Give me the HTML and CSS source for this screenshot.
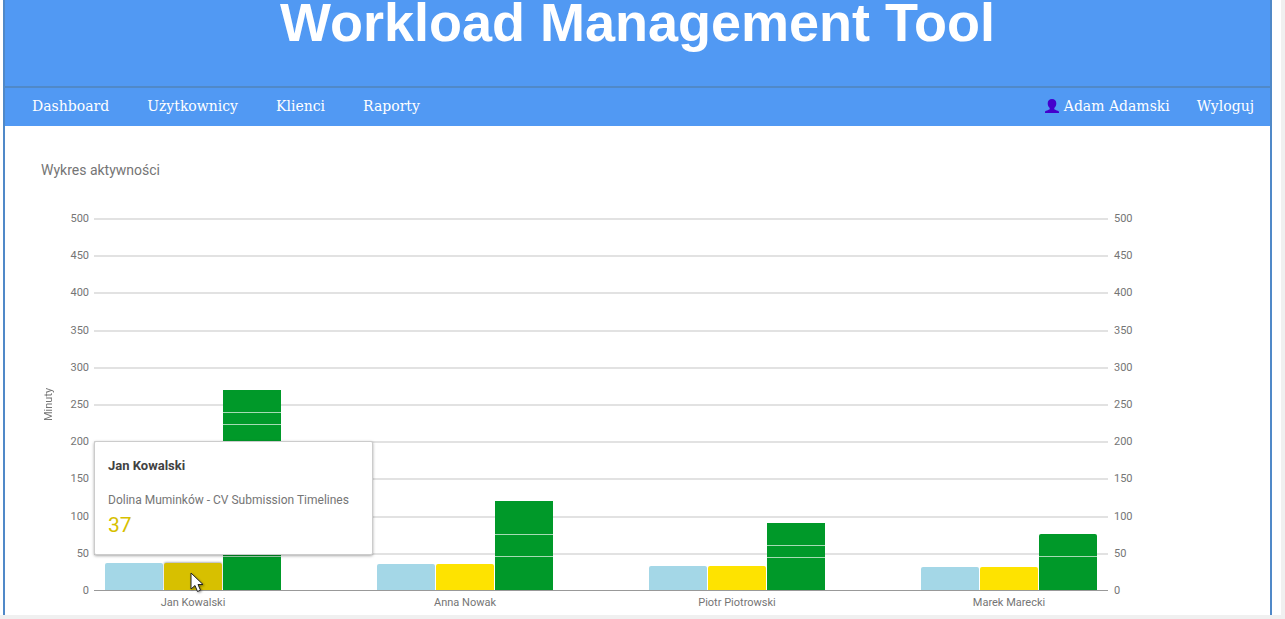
FILE: index.html
```html
<!DOCTYPE html>
<html lang="pl">
<head>
<meta charset="utf-8">
<title>Workload Management Tool</title>
<link rel="stylesheet" href="styles.css">
</head>
<body>
<div class="page">
  <div class="frame">
    <header class="banner"><h1>Workload Management Tool</h1></header>
    <nav class="nav">
      <div class="nav-main">
        <a href="#">Dashboard</a>
        <a href="#">Użytkownicy</a>
        <a href="#">Klienci</a>
        <a href="#">Raporty</a>
      </div>
      <div class="nav-user">
        <a href="#" class="user"><svg class="user-icon" viewBox="0 0 14 14" aria-hidden="true"><path d="M7 0C4.300 0 2.700 1.700 2.700 4.200c0 2 .7 3.700 2 4.700v1.300C3.800 11.200 0 11.300 0 13v1h14v-1c0-1.700-3.800-1.800-4.700-2.800V8.900c1.300-1 2-2.700 2-4.700C11.300 1.700 9.700 0 7 0z"/></svg>Adam Adamski</a>
        <a href="#">Wyloguj</a>
      </div>
    </nav>
    <main class="content">
      <h2 class="chart-title">Wykres aktywności</h2>
      <div class="chart">
        <div class="unit">Minuty</div>
        <div class="axis axis-left">
          <span>500</span><span>450</span><span>400</span><span>350</span><span>300</span><span>250</span><span>200</span><span>150</span><span>100</span><span>50</span><span>0</span>
        </div>
        <div class="plot">
          <div class="lines"><i></i><i></i><i></i><i></i><i></i><i></i><i></i><i></i><i></i><i></i><i></i></div>
          <div class="groups">
            <div class="group">
              <div class="bar blue" style="--v:36.5"></div>
              <div class="bar yellow active" style="--v:37">
                <div class="tooltip" role="tooltip">
                  <strong>Jan Kowalski</strong>
                  <span class="series">Dolina Muminków - CV Submission Timelines</span>
                  <span class="value">37</span>
                </div>
                <svg class="cursor" viewBox="0 0 14 21" aria-hidden="true"><path d="M1 1v16l4-3.500 2.500 6 3-1.300L8 12.500h5z"/></svg>
              </div>
              <div class="bar stack" style="--v:270"><i style="flex-grow:30"></i><i style="flex-grow:15"></i><i style="flex-grow:180"></i><i style="flex-grow:45"></i></div>
            </div>
            <div class="group">
              <div class="bar blue" style="--v:34.5"></div>
              <div class="bar yellow" style="--v:34.5"></div>
              <div class="bar stack" style="--v:120"><i style="flex-grow:45"></i><i style="flex-grow:30"></i><i style="flex-grow:45"></i></div>
            </div>
            <div class="group">
              <div class="bar blue" style="--v:32.5"></div>
              <div class="bar yellow" style="--v:32.5"></div>
              <div class="bar stack" style="--v:90"><i style="flex-grow:30"></i><i style="flex-grow:15"></i><i style="flex-grow:45"></i></div>
            </div>
            <div class="group">
              <div class="bar blue" style="--v:31.5"></div>
              <div class="bar yellow" style="--v:31.5"></div>
              <div class="bar stack rounded" style="--v:75"><i style="flex-grow:30"></i><i style="flex-grow:45"></i></div>
            </div>
          </div>
        </div>
        <div class="axis axis-right">
          <span>500</span><span>450</span><span>400</span><span>350</span><span>300</span><span>250</span><span>200</span><span>150</span><span>100</span><span>50</span><span>0</span>
        </div>
        <div class="names"><span>Jan Kowalski</span><span>Anna Nowak</span><span>Piotr Piotrowski</span><span>Marek Marecki</span></div>
      </div>
    </main>
  </div>
</div>
</body>
</html>
```

FILE: styles.css
```css
* { box-sizing: border-box; }

body {
  margin: 0;
  background: #f0f0f0;
  font-family: Roboto, "Liberation Sans", sans-serif;
}

.page {
  display: flex;
  min-height: calc(100vh - 4px);
  margin: 0 4px 4px 0;
  padding: 0 9px 0 3px;
  background: #fff;
}

.frame {
  flex: 1;
  min-width: 0;
  border: solid #5089c8;
  border-width: 0 2px;
}

.banner {
  padding-bottom: 42px;
  background: #5199f3;
  color: #fff;
  text-align: center;
}

.banner h1 {
  margin: 0;
  font: bold 54px/44px "Liberation Sans", Arial, sans-serif;
}

.nav {
  display: flex;
  justify-content: space-between;
  padding: 0 16px 2px 27px;
  border-top: 2px solid #5089c8;
  background: #5199f3;
  font: 14px/36px "DejaVu Serif", serif;
}

.nav-main { display: flex; gap: 38px; }
.nav-user { display: flex; gap: 27px; }
.nav a { color: #fff; text-decoration: none; }

.user { display: flex; align-items: center; gap: 5px; }
.user-icon { width: 14px; height: 14px; fill: #4400cc; }

.content { padding: 36px 138px 0 36px; }

.chart-title {
  margin: 0 0 40px;
  color: #757575;
  font-size: 14px;
  font-weight: 400;
  line-height: 16px;
}

.chart {
  display: grid;
  grid-template-columns: 16px 37px 1fr 24px;
  grid-template-rows: 373px auto;
  color: #757575;
  font-size: 11px;
  line-height: 12px;
}

.unit {
  writing-mode: vertical-rl;
  transform: rotate(180deg);
  text-align: center;
  line-height: 16px;
}

.axis {
  display: flex;
  flex-direction: column;
  justify-content: space-between;
  margin: -5px 0 -6px;
}

.axis-left { padding-right: 5px; text-align: right; }
.axis-right { padding-left: 6px; }

.plot { display: grid; grid-template: 100% / 100%; }
.lines, .groups { grid-area: 1 / 1; }

.lines {
  display: flex;
  flex-direction: column;
  justify-content: space-between;
}

.lines i { height: 2px; background: #e2e2e2; }
.lines i:last-child { height: 1px; background: #999; }

.groups, .names {
  display: grid;
  grid-template-columns: repeat(4, 1fr);
  gap: 96px;
  padding: 0 11px;
}

.groups { margin: 1px 0; }

.group {
  display: grid;
  grid-template-columns: repeat(3, 1fr);
  gap: 1px;
  align-items: end;
}

.bar {
  height: calc(var(--v) / 500 * 100%);
  border-radius: 2px 2px 0 0;
}

.blue { background: #a4d7e7; }
.yellow { background: #fee300; }
.active {
  position: relative;
  background: #d7c000;
  box-shadow: 0 -1px 2px rgba(0, 0, 0, .3);
}

.stack { display: flex; flex-direction: column; border-radius: 1px 1px 0 0; }
.stack i { flex: 0 1 0; background: #009929; }
.stack i + i { border-top: 1px solid #a6dbb4; }
.rounded { border-radius: 2px 2px 0 0; overflow: hidden; }

.tooltip {
  position: absolute;
  z-index: 1;
  left: -70px;
  bottom: calc(100% + 8px);
  display: flex;
  flex-direction: column;
  min-width: 279px;
  padding: 16px 13px;
  border: 1px solid #ccc;
  border-radius: 2px;
  background: #fff;
  box-shadow: 0 1px 3px rgba(0, 0, 0, .35);
  font-size: 12px;
  line-height: 16px;
  white-space: nowrap;
}

.tooltip strong { margin-bottom: 18px; color: #424242; font-size: 13px; }
.series { color: #757575; }
.value { margin-top: 4px; color: #d7c000; font-size: 21px; line-height: 26px; }

.cursor {
  position: absolute;
  z-index: 2;
  left: 26px;
  top: 9px;
  width: 14px;
  height: 21px;
  fill: #fff;
  stroke: #222;
  filter: drop-shadow(1px 1px 1px rgba(0, 0, 0, .4));
}

.names {
  grid-column: 3;
  padding-top: 6px;
  text-align: center;
  white-space: nowrap;
}
```
